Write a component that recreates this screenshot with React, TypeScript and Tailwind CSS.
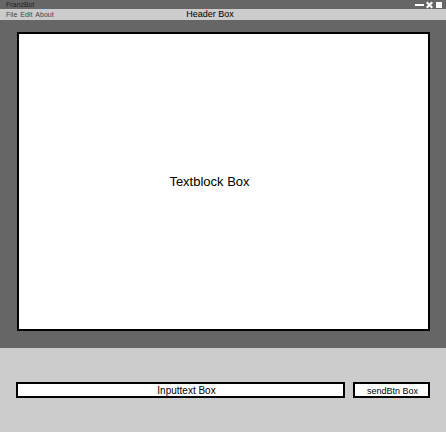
import React from "react";

const menuItems = ["File", "Edit", "About"];

function TitleBar() {
  return (
    <div className="flex h-[9px] items-center justify-between bg-[#666666] pr-1 pl-1.5">
      <h1 className="text-[7px] leading-[9px] text-[#222222]">FranzBot</h1>
      <div className="flex h-[9px] items-center gap-0.5">
        <button type="button" aria-label="Minimize" className="flex h-2 items-center">
          <svg width="9" height="8" viewBox="0 0 9 8" aria-hidden="true">
            <rect x="0" y="3" width="9" height="2" fill="#fff" />
          </svg>
        </button>
        <button type="button" aria-label="Close" className="flex h-2 items-center">
          <svg width="7" height="8" viewBox="0 0 7 8" aria-hidden="true">
            <path d="M0.7 1.2 6.3 6.8M6.3 1.2 0.7 6.8" stroke="#fff" strokeWidth="2.2" />
          </svg>
        </button>
        <button type="button" aria-label="Maximize" className="ml-px flex h-2 items-center">
          <svg width="6" height="8" viewBox="0 0 6 8" aria-hidden="true">
            <rect x="0" y="1" width="6" height="6" fill="#fff" />
          </svg>
        </button>
      </div>
    </div>
  );
}

function Header() {
  return (
    <header className="grid h-[11px] items-center bg-[#cccccc]">
      <h2 className="col-start-1 row-start-1 pr-[26px] text-center text-[9px] leading-[11px] text-black">
        Header Box
      </h2>
      <nav className="col-start-1 row-start-1 flex gap-[3px] justify-self-start pl-1.5 text-[7px] leading-[11px] text-[#444444]">
        {menuItems.map((item) => (
          <button key={item} type="button">
            {item}
          </button>
        ))}
      </nav>
    </header>
  );
}

export default function App() {
  return (
    <div className="flex min-h-screen flex-col bg-[#cccccc] font-['Liberation_Sans',Arial,sans-serif]">
      <TitleBar />
      <Header />
      <main className="flex flex-1 bg-[#666666] pt-3 pr-4 pb-[17px] pl-[17px]">
        <section className="flex flex-1 items-center justify-center border-2 border-black bg-white pr-7">
          <p className="text-[13px] leading-4 text-black">Textblock Box</p>
        </section>
      </main>
      <form
        className="flex gap-2 pt-[34px] pr-4 pb-[34px] pl-4"
        onSubmit={(event) => event.preventDefault()}
      >
        <input
          type="text"
          aria-label="Message"
          defaultValue="Inputtext Box"
          className="h-4 min-w-0 flex-1 border-2 border-black bg-white pl-3 text-center text-[10px] leading-3 text-black outline-none"
        />
        <button
          type="submit"
          className="flex h-4 w-[77px] items-center justify-center border-2 border-black bg-white pt-0.5 pl-0.5 text-[9px] leading-3 text-black"
        >
          sendBtn Box
        </button>
      </form>
    </div>
  );
}
